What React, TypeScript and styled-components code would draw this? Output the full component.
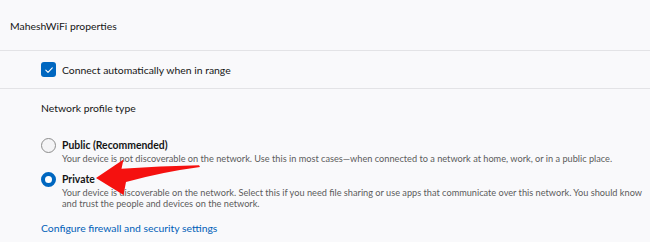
import React from 'react';
import styled, { createGlobalStyle } from 'styled-components';

const GlobalStyle = createGlobalStyle`
  html, body {
    margin: 0;
    padding: 0;
    background: #f9f9fb;
  }
  body {
    font-family: "Segoe UI", Lato, "Noto Sans", sans-serif;
    color: #151515;
  }
`;

const Page = styled.div`
  position: relative;
  width: 650px;
  height: 242px;
  overflow: hidden;
  background: #f9f9fb;
`;

const Header = styled.div`
  height: 50px;
  display: flex;
  align-items: center;
  padding: 2px 0 0 10px;
  box-sizing: border-box;
  font-size: 10.4px;
`;

const Divider = styled.div`
  height: 1px;
  background: #e3e3e6;
`;

const CheckRow = styled.label`
  height: 37px;
  display: flex;
  align-items: center;
  gap: 6px;
  padding-left: 41px;
  font-size: 10.4px;
`;

const CheckBox = styled.span`
  width: 15px;
  height: 15px;
  border-radius: 3px;
  background: #0067c0;
  display: flex;
  align-items: center;
  justify-content: center;
`;

const Body = styled.div`
  padding: 10px 0 0 41px;
`;

const SectionLabel = styled.div`
  font-size: 10.4px;
  line-height: 18px;
`;

const Options = styled.div`
  display: flex;
  flex-direction: column;
  gap: 7px;
  margin-top: 21px;
`;

const Option = styled.div`
  display: grid;
  grid-template-columns: 15px 1fr;
  column-gap: 6px;
  align-items: center;
`;

const Radio = styled.span<{ $checked?: boolean }>`
  box-sizing: border-box;
  width: 15px;
  height: 15px;
  border-radius: 50%;
  border: ${p => (p.$checked ? '4px solid #0067c0' : '1px solid #8d8d8d')};
  background: ${p => (p.$checked ? '#ffffff' : '#f4f4f6')};
`;

const OptionTitle = styled.div`
  font-size: 10.4px;
  font-weight: 700;
  line-height: 15px;
`;

const OptionDesc = styled.div`
  grid-column: 2;
  font-size: 9.2px;
  line-height: 11.7px;
  color: #5c5c5c;
  max-width: 586px;
`;

const Link = styled.a`
  display: inline-block;
  margin-top: 12px;
  font-size: 10.4px;
  color: #0060b8;
  text-decoration: none;
`;

const Arrow = styled.svg`
  position: absolute;
  left: 0;
  top: 0;
  pointer-events: none;
`;

function App() {
  return (
    <Page>
      <GlobalStyle />
      <Header>MaheshWiFi properties</Header>
      <Divider />
      <CheckRow>
        <CheckBox>
          <svg width="10" height="10" viewBox="0 0 10 10">
            <path d="M1.8 5.2 L4 7.3 L8.3 2.8" fill="none" stroke="#fff" strokeWidth="1.1" strokeLinecap="round" strokeLinejoin="round" />
          </svg>
        </CheckBox>
        Connect automatically when in range
      </CheckRow>
      <Divider />
      <Body>
        <SectionLabel>Network profile type</SectionLabel>
        <Options>
          <Option>
            <Radio />
            <OptionTitle>Public (Recommended)</OptionTitle>
            <OptionDesc>
              Your device is not discoverable on the network. Use this in most cases—when connected to a network at home, work, or in a public place.
            </OptionDesc>
          </Option>
          <Option>
            <Radio $checked />
            <OptionTitle>Private</OptionTitle>
            <OptionDesc>
              Your device is discoverable on the network. Select this if you need file sharing or use apps that communicate over this network. You should know and trust the people and devices on the network.
            </OptionDesc>
          </Option>
        </Options>
        <Link href="#">Configure firewall and security settings</Link>
      </Body>
      <Arrow width="650" height="242" viewBox="0 0 650 242">
        <path
          d="M96 178 L123.5 159.5 L121.5 168.8 Q160 166 199 165.3 L200 167 Q162 172 126 182 L123.5 195 Z"
          fill="#f5110f"
        />
      </Arrow>
    </Page>
  );
}

export default App;
